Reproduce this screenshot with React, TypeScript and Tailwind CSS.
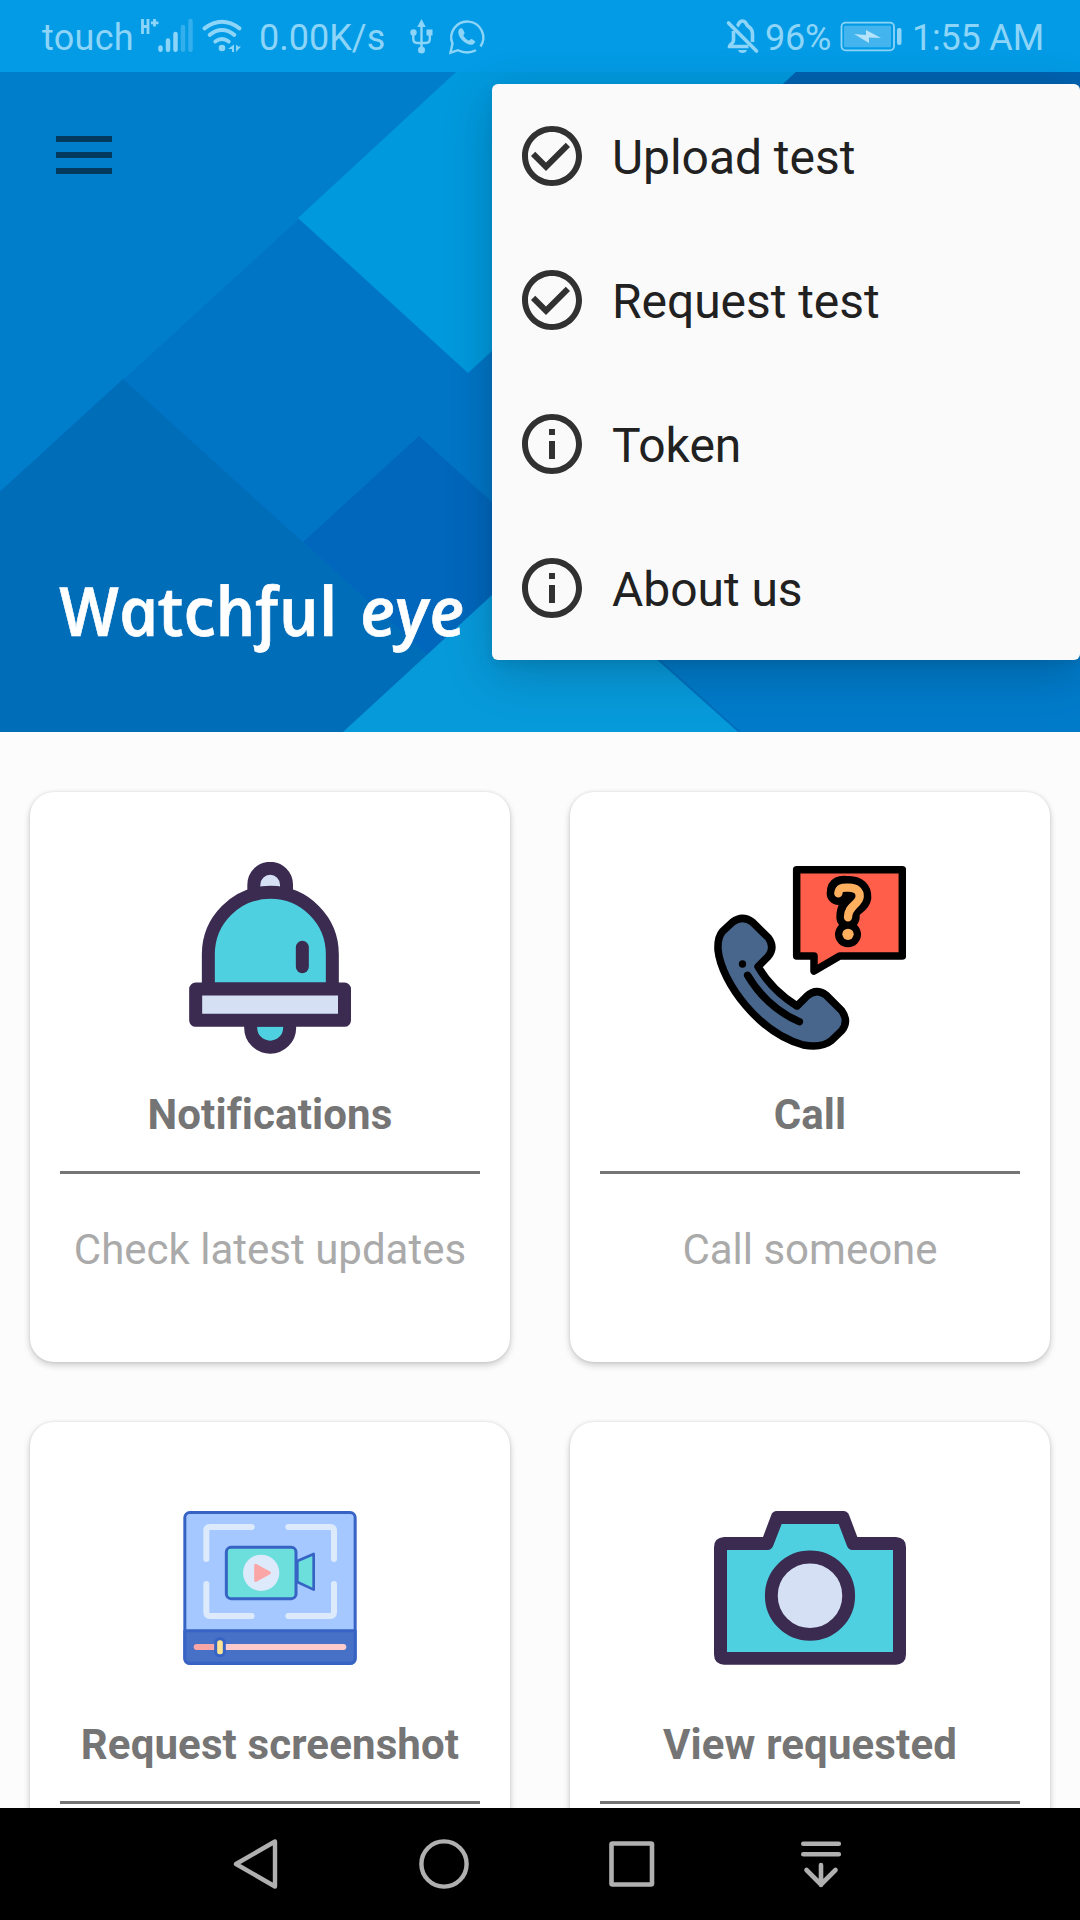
import type { ReactNode } from "react";

const NAVY = "#3b2b50";

function StatusBar() {
  return (
    <div className="relative flex h-[72px] shrink-0 items-center bg-[#039be5] text-[36px] leading-[42px] text-[#8dd5f8]">
      <span className="ml-[42px] w-[97px] pt-[3px] tracking-[0.3px]">touch</span>
      <svg className="h-[72px] w-[106px]" viewBox="139 0 106 72" fill="none" stroke="currentColor">
        <path d="M142.500 19v15M148 19v15M142 26.500h6M154.500 19v7.500M151 22.800h7.500" strokeWidth="2.800" />
        <g strokeWidth="4.500" strokeLinecap="round">
          <path d="M160.500 47.500v2.300M168 40.500v9.300M175.500 34v15.800" />
          <path d="M183 27v22.800M190.500 21v28.800" opacity=".35" />
        </g>
        <g strokeWidth="4" strokeLinecap="round">
          <path d="M204.500 28.300q17.500-13.200 35 0M209.700 34.800q12.300-9.600 24.600 0M215.300 41.500q6.700-5 13.400 0" />
        </g>
        <circle cx="222" cy="48" r="3.300" fill="currentColor" stroke="none" />
        <path d="M234 44.500v7.500h-2v-3h-4zM236 44.500v7.500l5-5.500h-3z" fill="currentColor" stroke="none" />
      </svg>
      <span className="ml-[14px] w-[150px] pt-[3px]">0.00K/s</span>
      <svg className="h-[72px] w-[80px]" viewBox="409 0 80 72" fill="none" stroke="currentColor">
        <g strokeWidth="2.400">
          <path d="M421.500 24v24M413.300 33v6q0 4 4 4h8.500q4 0 4-4v-6" />
          <g fill="currentColor" stroke="none">
            <path d="M421.500 19l4.200 8h-8.400zM426.500 29.500h6v6h-6z" />
            <circle cx="413.500" cy="32.500" r="3.200" />
            <circle cx="421.500" cy="50" r="3.500" />
          </g>
        </g>
        <path d="M476 50.200q-9 4.500-18 0l-7.500 2.500 2-9A16 16 0 1 1 480.500 46.500" strokeWidth="2.400" />
        <path d="M459 29.500c1-1.600 3.200-1.600 4 0l1.500 3c.6 1.400-1.500 2.200-1 3.400q2 3 5 4.600c1.300.3 2-2 3.300-1.400l3 1.800c1.400 1-1.500 4-3.800 3.900-7.500-.8-15-10-12-15.300z" fill="currentColor" stroke="none" />
      </svg>
      <div className="ml-auto flex items-center">
        <svg className="h-[72px] w-[40px]" viewBox="725 0 40 72" fill="none" stroke="currentColor" strokeWidth="3.600">
          <path d="M728.500 23l28 28" strokeLinecap="round" />
          <path d="M733.500 31v9.500c0 3-4 4-4 6h19M737 26c2.500-1.500 1.500-5 5.500-5s3 3.500 6 5.500 4 4 4 7.500v8" />
          <path d="M738 50h9q-1 3-4.500 3t-4.500-3z" fill="currentColor" stroke="none" />
        </svg>
        <span className="w-[74px] pt-[3px] tracking-[-0.2px]">96%</span>
        <svg className="h-[72px] w-[64px]" viewBox="839 0 64 72" fill="none">
          <rect x="841.500" y="22.700" width="52.500" height="27.600" rx="4" stroke="currentColor" strokeWidth="1.800" />
          <rect x="844" y="25.700" width="47" height="21.600" rx="1" fill="#43b4ed" />
          <path d="M854 34l12 1V30l15 8-12-.5V43z" fill="#b5e3fa" />
          <rect x="897" y="28" width="4.500" height="17" rx="2" fill="currentColor" />
        </svg>
        <span className="ml-[9px] w-[168px] pt-[3px] tracking-[-0.2px]">1:55 AM</span>
      </div>
    </div>
  );
}

function HeroPattern() {
  return (
    <svg className="absolute inset-0 h-full w-full" viewBox="0 72 1080 660" preserveAspectRatio="none">
      <path d="M0 72H1080V732H0z" fill="#0075c6" />
      <path d="M0 72H457L299 219 123 380 0 492z" fill="#007ecc" />
      <path d="M456 72H796L468 373 298 218z" fill="#0099dd" />
      <path d="M796 72H1080V330H515z" fill="#0062b0" />
      <path d="M0 491.500L123 379 427.500 655 343 732H0z" fill="#006db9" />
      <path d="M303 542L419 436 600 600 427.500 655z" fill="#0067bc" />
      <path d="M500 560H1080V732H739.500z" fill="#007bca" />
      <path d="M343 732L530 560 548 561 739.500 732z" fill="#079adb" />
      <path d="M655 656.500L739.500 732" stroke="#0070be" strokeWidth="2" />
    </svg>
  );
}

function CheckIcon() {
  return (
    <svg className="h-[72px] w-[72px] fill-[#313131]" viewBox="0 0 24 24">
      <path d="M16.590 7.580L10 14.170l-3.590-3.580L5 12l5 5 8-8zM12 2C6.480 2 2 6.480 2 12s4.480 10 10 10 10-4.480 10-10S17.520 2 12 2zm0 18c-4.420 0-8-3.580-8-8s3.580-8 8-8 8 3.580 8 8-3.580 8-8 8z" />
    </svg>
  );
}

function InfoIcon() {
  return (
    <svg className="h-[72px] w-[72px] fill-[#313131]" viewBox="0 0 24 24">
      <path d="M11 17h2v-6h-2v6zm1-15C6.480 2 2 6.480 2 12s4.480 10 10 10 10-4.480 10-10S17.520 2 12 2zm0 18c-4.410 0-8-3.590-8-8s3.590-8 8-8 8 3.590 8 8-3.590 8-8 8zM11 9h2V7h-2v2z" />
    </svg>
  );
}

const menu: { label: string; icon: ReactNode }[] = [
  { label: "Upload test", icon: <CheckIcon /> },
  { label: "Request test", icon: <CheckIcon /> },
  { label: "Token", icon: <InfoIcon /> },
  { label: "About us", icon: <InfoIcon /> },
];

function Hero() {
  return (
    <header className="relative flex h-[660px] shrink-0 flex-col justify-between">
      <HeroPattern />
      <button className="relative ml-[56px] mt-[64px] flex w-[56px] flex-col gap-[10px]" aria-label="Menu">
        <span className="h-[6px] bg-[#02395c]" />
        <span className="h-[6px] bg-[#02395c]" />
        <span className="h-[6px] bg-[#02395c]" />
      </button>
      <h1 className="relative mb-[74px] ml-[68px] w-max whitespace-nowrap font-['Open_Sans'] text-[68px] font-semibold italic leading-[96px] text-white [-webkit-text-stroke:0.6px_white]">
        <span className="inline-block origin-bottom-left skew-x-[12deg]">Watchful</span>{" "}
        <span className="inline-block origin-bottom-left skew-x-[6deg]">eye</span>
      </h1>
      <div className="absolute right-0 top-[12px] z-10 w-[588px] rounded-[6px] bg-[#fafafa] shadow-[0_14px_50px_rgba(0,0,0,0.2),0_4px_10px_rgba(0,0,0,0.06)]">
        {menu.map((m) => (
          <div key={m.label} className="flex h-[144px] items-center gap-[24px] pl-[24px] text-[48px] tracking-[-0.05px] text-[#212121]">
            {m.icon}
            <span className="pt-[3px]">{m.label}</span>
          </div>
        ))}
      </div>
    </header>
  );
}

function BellArt() {
  return (
    <svg className="h-[192px] w-[192px] shrink-0" viewBox="42 66 576 576" stroke={NAVY} strokeWidth="39" strokeLinejoin="round">
      <path d="M281.500 165V134a49 49 0 0 1 98 0V165z" fill="#d5e0f4" />
      <path d="M272 540v23a58.500 58.500 0 0 0 117 0v-23z" fill="#4fd0e0" />
      <path d="M145 447V343a186 186 0 0 1 372 0V447z" fill="#4fd0e0" />
      <path d="M107 447H553.500V541H107z" fill="#d5e0f4" />
      <path d="M427 322v58" strokeLinecap="round" />
    </svg>
  );
}

function CallArt() {
  return (
    <svg className="h-[192px] w-[192px] shrink-0" viewBox="72 66 576 576" stroke="#000" strokeWidth="22.500" strokeLinejoin="round" strokeLinecap="round">
      <path d="M320 89.500H637V348H449L372 393V348H320z" fill="#ff5f4a" />
      <path
        d="M128 246Q157 224 187 246L234 292Q257 322 234 350L204 380Q245 450 321 498L350 469Q378 443 408 465L455 512Q477 543 456 571L424 602Q395 625 340 615C210 580 95 430 84 330Q82 292 98 274z"
        fill="#48658b"
      />
      <path d="M173 406Q230 502 328 545" fill="none" />
      <circle cx="157.500" cy="372" r="11" fill="#000" stroke="none" />
      <g fill="none">
        <path d="M445 160C445 137 460 143 477 143C500 143 510 155 509 172C505 196 473 190 474 232" strokeWidth="70" />
        <path d="M474 283v.1" strokeWidth="78" />
        <path d="M445 160C447 140 462 143 477 143C500 143 510 155 509 170C506 194 474 198 474 232" stroke="#ffb05f" strokeWidth="25" />
        <path d="M474 283v.1" stroke="#ffb05f" strokeWidth="34" />
      </g>
    </svg>
  );
}

function RecorderArt() {
  return (
    <svg className="h-[192px] w-[192px] shrink-0" viewBox="42 6 576 576" stroke="#3763c4" strokeWidth="9" strokeLinejoin="round" fill="none">
      <rect x="74.500" y="67.500" width="511" height="453" rx="15" fill="#a4c8ff" />
      <path d="M74.500 422H585.500V504q0 16-16 16H90.500q-16 0-16-16z" fill="#4671c6" />
      <g stroke="#ddeafb" strokeWidth="18" strokeLinecap="round">
        <path d="M275 111H150q-11 0-11 11v85M385 111H510q12 0 12 11v85M139 282v85q0 11 11 11H275M522 282v85q0 11-12 11H385" />
      </g>
      <path d="M412 213L461 192V299L412 276z" fill="#6cdedc" strokeWidth="8" />
      <rect x="199" y="172" width="209" height="154" rx="14" fill="#6cdedc" />
      <circle cx="303.500" cy="248.500" r="54.500" fill="#ddeafb" stroke="none" />
      <path d="M287 226L328 248.500 287 271z" fill="#faa6a6" stroke="#faa6a6" />
      <g strokeLinecap="round" strokeWidth="18">
        <path d="M195 471H550" stroke="#fdcbcb" />
        <path d="M110 471H170" stroke="#faa6a6" />
      </g>
      <rect x="167" y="446" width="26" height="51" rx="12" fill="#ffe593" />
    </svg>
  );
}

function CameraArt() {
  return (
    <svg className="h-[192px] w-[192px] shrink-0" viewBox="72 6 576 576" strokeLinejoin="round">
      <path
        d="M102 141H219L243 77Q247 63 261 63H460Q473 63 478 77L502 141H618Q648 143 648 172V493Q648 522 618 524H102Q72 522 72 493V172Q72 143 102 141z"
        fill={NAVY}
      />
      <path d="M111 180H233Q244 180 249 169L275 102H446L471 168Q476 180 487 180H609V486H111z" fill="#4fd0e0" />
      <circle cx="360" cy="317" r="116" fill="#d5e0f4" stroke={NAVY} strokeWidth="38.500" />
    </svg>
  );
}

const cards: { title: string; text?: string; art: ReactNode }[] = [
  { title: "Notifications", text: "Check latest updates", art: <BellArt /> },
  { title: "Call", text: "Call someone", art: <CallArt /> },
  { title: "Request screenshot", art: <RecorderArt /> },
  { title: "View requested", art: <CameraArt /> },
];

function Card({ title, text, art }: { title: string; text?: string; art: ReactNode }) {
  return (
    <section className="flex h-[570px] flex-col items-center rounded-[24px] bg-white px-[30px] pt-[70px] text-[42px] leading-[49px] shadow-[0_3px_7px_rgba(0,0,0,0.2),0_0_3px_rgba(0,0,0,0.1)]">
      {art}
      <h2 className="mt-[36px] whitespace-nowrap font-bold tracking-[0.13px] text-[#757575]">{title}</h2>
      <div className="mt-[32px] h-[3px] w-full shrink-0 bg-[#757575]" />
      {text && <p className="mt-[51px] whitespace-nowrap text-[#aaaaaa]">{text}</p>}
    </section>
  );
}

function NavBar() {
  return (
    <nav className="flex h-[112px] shrink-0 items-center gap-[132px] bg-black pl-[228px]">
      <svg className="h-[56px] w-[56px]" viewBox="228 1836 56 56" fill="none" stroke="#b0b0b0" strokeWidth="4.400" strokeLinejoin="round">
        <path d="M275 1841.500V1886.500L236 1864z" />
      </svg>
      <svg className="h-[56px] w-[56px]" viewBox="416 1836 56 56" fill="none" stroke="#b0b0b0" strokeWidth="4.400">
        <circle cx="444" cy="1864" r="22.600" />
      </svg>
      <svg className="h-[56px] w-[56px]" viewBox="604 1836 56 56" fill="none" stroke="#b0b0b0" strokeWidth="4.600">
        <rect x="611.500" y="1843.500" width="40.500" height="41" rx="1" />
      </svg>
      <svg className="h-[56px] w-[56px]" viewBox="792 1836 56 56" fill="none" stroke="#b0b0b0" strokeWidth="4.600" strokeLinecap="round" strokeLinejoin="round">
        <path d="M803.300 1843.700h35.500M803.300 1854.200h35.500M821 1865v20M806.500 1870L821 1884.500 835.500 1870" />
      </svg>
    </nav>
  );
}

export default function App() {
  return (
    <div className="flex h-[1920px] w-[1080px] flex-col overflow-hidden bg-[#fcfcfc] font-['Roboto',sans-serif]">
      <StatusBar />
      <Hero />
      <main className="grid min-h-0 flex-1 grid-cols-2 content-start gap-[60px] overflow-hidden px-[30px] pt-[60px]">
        {cards.map((c) => (
          <Card key={c.title} {...c} />
        ))}
      </main>
      <NavBar />
    </div>
  );
}
